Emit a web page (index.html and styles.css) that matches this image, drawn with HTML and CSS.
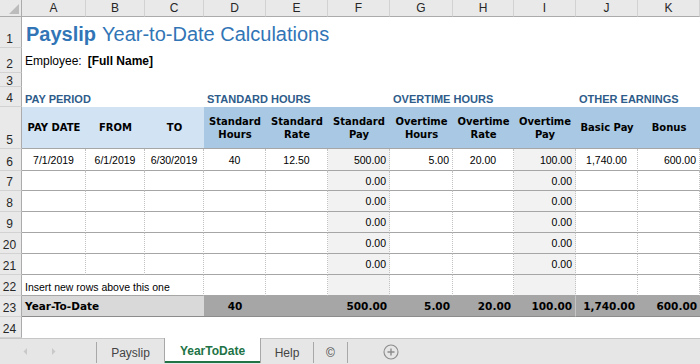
FILE: index.html
```html
<!DOCTYPE html>
<html lang="en">
<head>
    <meta charset="UTF-8">
    <title>Payslip Year-to-Date Calculations</title>
    <link rel="stylesheet" href="styles.css">
</head>
<body>

    <div class="sheet">
        <!-- column headings -->
        <div class="corner"><span class="tri"></span></div>
        <div class="col">A</div><div class="col">B</div><div class="col">C</div><div class="col">D</div>
        <div class="col">E</div><div class="col">F</div><div class="col">G</div><div class="col">H</div>
        <div class="col">I</div><div class="col">J</div><div class="col">K</div>

        <div class="rh">1</div>
        <div class="title"><b>Payslip</b> Year-to-Date Calculations</div>

        <div class="rh">2</div>
        <div class="emp">Employee:<b>[Full Name]</b></div>

        <div class="rh short">3</div>
        <div class="wide"></div>

        <div class="rh">4</div>
        <div class="sec s3">PAY PERIOD</div>
        <div class="sec s3">STANDARD HOURS</div>
        <div class="sec s3">OVERTIME HOURS</div>
        <div class="sec s2">OTHER EARNINGS</div>

        <!-- table header -->
        <div class="rh">5</div>
        <div class="hd light">PAY DATE</div>
        <div class="hd light">FROM</div>
        <div class="hd light">TO</div>
        <div class="hd">Standard<br>Hours</div>
        <div class="hd">Standard<br>Rate</div>
        <div class="hd">Standard<br>Pay</div>
        <div class="hd">Overtime<br>Hours</div>
        <div class="hd">Overtime<br>Rate</div>
        <div class="hd">Overtime<br>Pay</div>
        <div class="hd">Basic Pay</div>
        <div class="hd">Bonus</div>

        <div class="rh">6</div>
        <div class="c ctr">7/1/2019</div>
        <div class="c ctr">6/1/2019</div>
        <div class="c ctr">6/30/2019</div>
        <div class="c ctr">40</div>
        <div class="c ctr">12.50</div>
        <div class="c rt shade">500.00</div>
        <div class="c rt">5.00</div>
        <div class="c ctr">20.00</div>
        <div class="c rt shade">100.00</div>
        <div class="c ctr">1,740.00</div>
        <div class="c rt">600.00</div>

        <div class="rh">7</div>
        <div class="c"></div><div class="c"></div><div class="c"></div><div class="c"></div><div class="c"></div>
        <div class="c rt shade">0.00</div><div class="c"></div><div class="c"></div>
        <div class="c rt shade">0.00</div><div class="c"></div><div class="c"></div>

        <div class="rh">8</div>
        <div class="c"></div><div class="c"></div><div class="c"></div><div class="c"></div><div class="c"></div>
        <div class="c rt shade">0.00</div><div class="c"></div><div class="c"></div>
        <div class="c rt shade">0.00</div><div class="c"></div><div class="c"></div>

        <div class="rh">9</div>
        <div class="c"></div><div class="c"></div><div class="c"></div><div class="c"></div><div class="c"></div>
        <div class="c rt shade">0.00</div><div class="c"></div><div class="c"></div>
        <div class="c rt shade">0.00</div><div class="c"></div><div class="c"></div>

        <div class="rh">20</div>
        <div class="c"></div><div class="c"></div><div class="c"></div><div class="c"></div><div class="c"></div>
        <div class="c rt shade">0.00</div><div class="c"></div><div class="c"></div>
        <div class="c rt shade">0.00</div><div class="c"></div><div class="c"></div>

        <div class="rh">21</div>
        <div class="c"></div><div class="c"></div><div class="c"></div><div class="c"></div><div class="c"></div>
        <div class="c rt shade">0.00</div><div class="c"></div><div class="c"></div>
        <div class="c rt shade">0.00</div><div class="c"></div><div class="c"></div>

        <div class="rh">22</div>
        <div class="c note">Insert new rows above this one</div>
        <div class="c"></div><div class="c"></div><div class="c shade"></div><div class="c"></div>
        <div class="c"></div><div class="c shade"></div><div class="c"></div><div class="c"></div>

        <!-- totals -->
        <div class="rh">23</div>
        <div class="tot label">Year-To-Date</div>
        <div class="tot ctr">40</div>
        <div class="tot"></div>
        <div class="tot rt">500.00</div>
        <div class="tot rt">5.00</div>
        <div class="tot rt">20.00</div>
        <div class="tot rt split">100.00</div>
        <div class="tot rt">1,740.00</div>
        <div class="tot rt">600.00</div>

        <div class="rh">24</div>
        <div class="wide"></div>
    </div>

    <div class="tabs">
        <div class="nav">
            <svg width="96" height="25" viewBox="0 0 96 25">
                <polygon points="27,9 27,16 23.5,12.5" fill="#c9c9c9"/>
                <polygon points="52,9 52,16 55.5,12.5" fill="#c9c9c9"/>
            </svg>
        </div>
        <div class="tab first">Payslip</div>
        <div class="tab active">YearToDate</div>
        <div class="tab help">Help</div>
        <div class="tab copy">©</div>
        <div class="add">
            <svg width="16" height="16" viewBox="0 0 16 16">
                <circle cx="8" cy="8" r="7" fill="none" stroke="#8c8c8c" stroke-width="1.1"/>
                <path d="M8 4.5v7M4.5 8h7" stroke="#8c8c8c" stroke-width="1.4"/>
            </svg>
        </div>
    </div>

</body>
</html>
```

FILE: styles.css
```css
body {
    margin: 0;
    width: 700px;
    height: 364px;
    overflow: hidden;
    background: white;
    font-family: "Liberation Sans", Arial, sans-serif;
    color: #000;
}
.sheet {
    display: grid;
    grid-template-columns: 22px 64px 59px 59px 62px 62px 62px 63px 61px 62px 62px 62px;
    grid-template-rows: 17px 31px 25px 14px 20px 42px 22px 20px 21px 21px 21px 21px 21px 21px 21px;
}
.sheet > div {
    box-sizing: border-box;
    min-width: 0;
    overflow: hidden;
    white-space: nowrap;
}

/* Headings */
.corner {
    background-color: #e9e9e9;
    border-right: 1px solid #ababab;
    border-bottom: 1px solid #ababab;
    display: flex;
    align-items: flex-end;
    justify-content: flex-end;
    padding: 0 2px 2px 0;
}
.tri {
    width: 10px;
    height: 10px;
    background-color: #bcbcbc;
    clip-path: polygon(100% 0, 100% 100%, 0 100%);
}
.col {
    background-color: #e9e9e9;
    border-right: 1px solid #d2d2d2;
    border-bottom: 1px solid #ababab;
    display: flex;
    align-items: center;
    justify-content: center;
    font-size: 12px;
    color: #262626;
}
.sheet > .rh {
    background-color: #e9e9e9;
    border-right: 1px solid #ababab;
    border-bottom: 1px solid #d2d2d2;
    display: flex;
    align-items: flex-end;
    justify-content: center;
    padding: 0 2px 3px 0;
    font-size: 12px;
    line-height: 10px;
    color: #262626;
    overflow: visible;
}
.sheet > .rh.short {
    align-items: center;
    padding: 2px 2px 0 0;
    line-height: 12px;
}

/* Title area */
.title {
    grid-column: span 11;
    display: flex;
    align-items: flex-end;
    padding: 0 0 2px 4px;
    font-size: 20px;
    line-height: 23px;
    color: #3175b6;
    white-space: pre;
}
.title b {
    margin-right: 6px;
}
.emp {
    grid-column: span 11;
    display: flex;
    align-items: flex-end;
    padding: 0 0 5px 3px;
    font-size: 12px;
    line-height: 14px;
}
.emp b {
    margin-left: 6px;
}
.wide {
    grid-column: span 11;
}
.sec {
    display: flex;
    align-items: flex-end;
    padding: 0 0 1px 3px;
    font-size: 11px;
    line-height: 13px;
    font-weight: bold;
    color: #2e5c8a;
}
.s3 { grid-column: span 3; }
.s2 { grid-column: span 2; }

/* Table */
.hd {
    background-color: #a8c8e3;
    border-bottom: 1px solid #a6a6a6;
    display: flex;
    align-items: center;
    justify-content: center;
    text-align: center;
    font-family: "DejaVu Sans", sans-serif;
    font-size: 10px;
    line-height: 13px;
    font-weight: bold;
}
.hd.light {
    background-color: #d2e3f3;
}
.c {
    border-bottom: 1px solid #a6a6a6;
    border-right: 1px dotted #c2c2c2;
    display: flex;
    align-items: center;
    padding: 0 3px;
    font-size: 10.5px;
}
.ctr { justify-content: center; }
.rt { justify-content: flex-end; }
.shade { background-color: #f2f2f2; }
.note {
    grid-column: span 3;
    padding-top: 3px;
}

/* Totals row */
.tot {
    background-color: #a6a6a6;
    border-bottom: 1px solid #8c8c8c;
    display: flex;
    align-items: center;
    padding: 0 3px;
    font-family: "DejaVu Sans", sans-serif;
    font-size: 10.5px;
    font-weight: bold;
}
.tot.label {
    grid-column: span 3;
    background-color: #d9d9d9;
}
.tot.split {
    border-right: 1px solid #c4c4c4;
}

/* Sheet tabs */
.tabs {
    box-sizing: border-box;
    height: 26px;
    background-color: #e6e6e6;
    border-top: 1px solid #c6c6c6;
    display: flex;
    align-items: flex-start;
    font-size: 12px;
    color: #444;
}
.nav {
    width: 96px;
    height: 25px;
}
.tab {
    box-sizing: border-box;
    height: 21px;
    margin-top: 3px;
    display: flex;
    align-items: center;
    justify-content: center;
}
.tab.first {
    width: 68px;
    border-left: 1px solid #a8a8a8;
}
.tab.active {
    width: 97px;
    height: 25px;
    margin-top: -1px;
    padding-top: 1px;
    background-color: white;
    border-left: 1px solid #a8a8a8;
    border-right: 1px solid #a8a8a8;
    box-shadow: inset 0 -2px 0 #217346;
    color: #217346;
    font-weight: bold;
}
.tab.help {
    width: 53px;
    border-right: 1px solid #a8a8a8;
}
.tab.copy {
    width: 34px;
    border-right: 1px solid #a8a8a8;
}
.add {
    margin: 5px 0 0 35px;
    height: 16px;
}
```
